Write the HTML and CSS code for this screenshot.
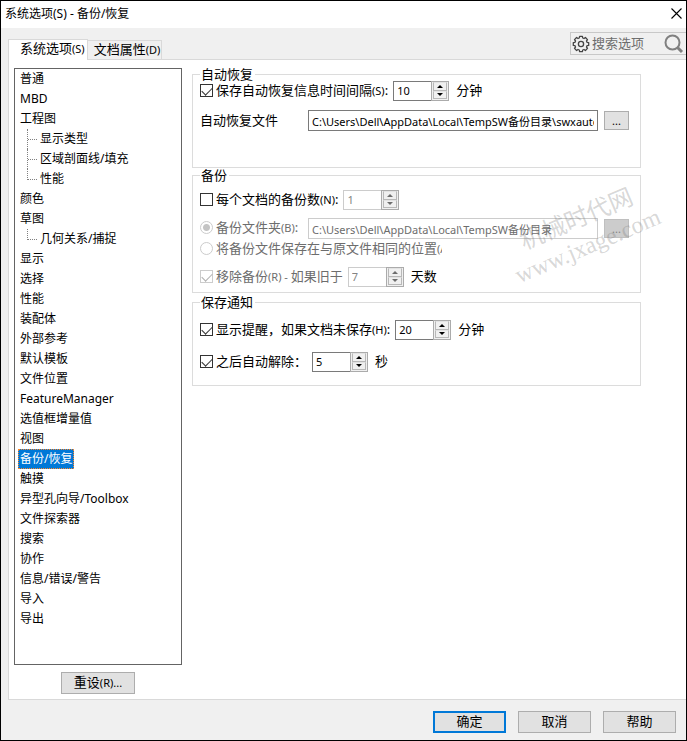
FILE: index.html
```html
<!DOCTYPE html>
<html lang="zh-CN">
<head>
<meta charset="utf-8">
<meta name="viewport" content="width=device-width, initial-scale=1">
<title>系统选项(S) - 备份/恢复</title>
<link rel="stylesheet" href="styles.css">
</head>
<body>
<div class="window">
  <header class="titlebar">
    <h1 class="title">系统选项(S) - 备份/恢复</h1>
    <button class="close" type="button" aria-label="关闭">
      <svg width="11" height="11" viewBox="0 0 11 11"><path d="M.5.5l10 10M10.5.5l-10 10" fill="none" stroke="#000" stroke-width="1.1"/></svg>
    </button>
  </header>

  <div class="toolbar">
    <nav class="tabs">
      <button class="tab tab-active" type="button">系统选项<span class="key">(S)</span></button>
      <button class="tab" type="button">文档属性<span class="key">(D)</span></button>
    </nav>
    <div class="search">
      <svg width="18" height="18" viewBox="0 0 18 18" fill="none" stroke="#444" stroke-width="1.3" stroke-linejoin="round">
        <path d="M7.3 3L7.6 1.3H10.4L10.7 3L12 3.5L13.4 2.5L15.5 4.6L14.5 6L15 7.3L16.7 7.6V10.4L15 10.7L14.5 12L15.5 13.4L13.4 15.5L12 14.5L10.7 15L10.4 16.7H7.6L7.3 15L6 14.5L4.6 15.5L2.5 13.4L3.5 12L3 10.7L1.3 10.4V7.6L3 7.3L3.5 6L2.5 4.6L4.6 2.5L6 3.5Z"/>
        <circle cx="9" cy="9" r="2.6"/>
      </svg>
      <input class="search-input" type="text" aria-label="搜索选项" placeholder="搜索选项">
      <svg width="20" height="20" viewBox="0 0 20 20" fill="none" stroke="#808080"><circle cx="8.5" cy="8.5" r="7" stroke-width="2"/><path d="M13.5 13.5l4.5 4.5" stroke-width="3"/></svg>
    </div>
  </div>

  <main class="panel">
    <div class="side">
      <ul class="tree">
        <li><a href="#">普通</a></li>
        <li><a href="#">MBD</a></li>
        <li><a href="#">工程图</a>
          <ul class="branch">
            <li><a href="#">显示类型</a></li>
            <li><a href="#">区域剖面线/填充</a></li>
            <li><a href="#">性能</a></li>
          </ul>
        </li>
        <li><a href="#">颜色</a></li>
        <li><a href="#">草图</a>
          <ul class="branch">
            <li><a href="#">几何关系/捕捉</a></li>
          </ul>
        </li>
        <li><a href="#">显示</a></li>
        <li><a href="#">选择</a></li>
        <li><a href="#">性能</a></li>
        <li><a href="#">装配体</a></li>
        <li><a href="#">外部参考</a></li>
        <li><a href="#">默认模板</a></li>
        <li><a href="#">文件位置</a></li>
        <li><a href="#">FeatureManager</a></li>
        <li><a href="#">选值框增量值</a></li>
        <li><a href="#">视图</a></li>
        <li><a href="#" class="selected" aria-current="page">备份/恢复</a></li>
        <li><a href="#">触摸</a></li>
        <li><a href="#">异型孔向导/Toolbox</a></li>
        <li><a href="#">文件探索器</a></li>
        <li><a href="#">搜索</a></li>
        <li><a href="#">协作</a></li>
        <li><a href="#">信息/错误/警告</a></li>
        <li><a href="#">导入</a></li>
        <li><a href="#">导出</a></li>
      </ul>
      <button class="btn reset" type="button">重设<span class="key">(R)...</span></button>
    </div>

    <form class="settings">
      <fieldset class="group group-recover">
        <legend>自动恢复</legend>
        <div class="row">
          <input class="check" type="checkbox" id="auto" checked>
          <label for="auto">保存自动恢复信息时间间隔<span class="key">(S)</span>:</label>
          <span class="spin">
            <input type="text" inputmode="numeric" value="10" aria-label="时间间隔">
            <span class="arrows"><button type="button" class="up" aria-label="增加"></button><button type="button" class="down" aria-label="减少"></button></span>
          </span>
          <span class="unit">分钟</span>
        </div>
        <div class="row">
          <label class="lead" for="recover-path">自动恢复文件</label>
          <input class="path" id="recover-path" type="text" value="C:\Users\Dell\AppData\Local\TempSW备份目录\swxauto">
          <button class="btn browse" type="button" aria-label="浏览">...</button>
        </div>
      </fieldset>

      <fieldset class="group group-backup">
        <legend>备份</legend>
        <div class="row">
          <input class="check" type="checkbox" id="copies">
          <label for="copies">每个文档的备份数<span class="key">(N)</span>:</label>
          <span class="spin">
            <input type="text" inputmode="numeric" value="1" aria-label="备份数" disabled>
            <span class="arrows"><button type="button" class="up" aria-label="增加" disabled></button><button type="button" class="down" aria-label="减少" disabled></button></span>
          </span>
        </div>
        <div class="places">
          <div class="row">
            <span class="lead option">
              <input class="radio" type="radio" name="place" id="folder" checked disabled>
              <label class="off" for="folder">备份文件夹<span class="key">(B)</span>:</label>
            </span>
            <input class="path" type="text" aria-label="备份文件夹" value="C:\Users\Dell\AppData\Local\TempSW备份目录" disabled>
            <button class="btn browse" type="button" aria-label="浏览" disabled>...</button>
          </div>
          <div class="row">
            <span class="option">
              <input class="radio" type="radio" name="place" id="same" disabled>
              <label class="off clipped" for="same">将备份文件保存在与原文件相同的位置<span class="key">(A)</span></label>
            </span>
          </div>
        </div>
        <div class="row">
          <input class="check" type="checkbox" id="remove" checked disabled>
          <label class="off" for="remove">移除备份<span class="key">(R) - </span>如果旧于</label>
          <span class="spin">
            <input type="text" inputmode="numeric" value="7" aria-label="天数" disabled>
            <span class="arrows"><button type="button" class="up" aria-label="增加" disabled></button><button type="button" class="down" aria-label="减少" disabled></button></span>
          </span>
          <span class="unit">天数</span>
        </div>
        <div class="watermark" aria-hidden="true"><span>机械时代网</span><span class="site">www.jxage.com</span></div>
      </fieldset>

      <fieldset class="group group-notify">
        <legend>保存通知</legend>
        <div class="row">
          <input class="check" type="checkbox" id="remind" checked>
          <label for="remind">显示提醒，如果文档未保存<span class="key">(H)</span>:</label>
          <span class="spin">
            <input type="text" inputmode="numeric" value="20" aria-label="提醒间隔">
            <span class="arrows"><button type="button" class="up" aria-label="增加"></button><button type="button" class="down" aria-label="减少"></button></span>
          </span>
          <span class="unit">分钟</span>
        </div>
        <div class="row">
          <input class="check" type="checkbox" id="dismiss" checked>
          <label for="dismiss">之后自动解除：</label>
          <span class="spin">
            <input type="text" inputmode="numeric" value="5" aria-label="解除时间">
            <span class="arrows"><button type="button" class="up" aria-label="增加"></button><button type="button" class="down" aria-label="减少"></button></span>
          </span>
          <span class="unit">秒</span>
        </div>
      </fieldset>
    </form>
  </main>

  <footer class="footer">
    <button class="btn primary" type="button">确定</button>
    <button class="btn" type="button">取消</button>
    <button class="btn" type="button">帮助</button>
  </footer>
</div>
</body>
</html>
```
FILE: styles.css
```css
* {
  box-sizing: border-box;
}

body {
  margin: 0;
  color: #000;
  font: 13px/16px "Noto Sans", "Noto Sans CJK SC", sans-serif;
}

button,
input {
  margin: 0;
  padding: 0;
  border-radius: 0;
  color: inherit;
  font: inherit;
}

ul {
  margin: 0;
  padding: 0;
  list-style: none;
}

.key {
  font-size: 11px;
}

.window {
  display: flex;
  flex-direction: column;
  min-height: 100vh;
  border: 1px solid #000;
  background: #f0f0f0;
}

/* Title bar */
.titlebar {
  display: flex;
  align-items: center;
  justify-content: space-between;
  height: 27px;
  padding: 0 4px 2px;
  background: #fff;
}

.title {
  margin: 0;
  font-size: 12px;
  font-weight: 400;
}

.close {
  display: flex;
  border: 0;
  background: none;
}

/* Tabs and search */
.toolbar {
  display: flex;
  align-items: flex-end;
  justify-content: space-between;
  height: 31px;
  padding-left: 7px;
}

.tabs {
  display: flex;
  align-items: flex-end;
}

.tab {
  height: 19px;
  padding: 0 1px 2px 6px;
  border: 1px solid #d9d9d9;
  border-width: 1px 1px 0 0;
  background: #f0f0f0;
  white-space: nowrap;
}

.tab-active {
  z-index: 1;
  height: 21px;
  margin-bottom: -1px;
  padding: 0 2px 4px 11px;
  border-left-width: 1px;
  background: #fff;
}

.search {
  display: flex;
  align-items: center;
  gap: 2px;
  width: 116px;
  height: 23px;
  margin-bottom: 4px;
  padding: 0 2px 0 1px;
  border: 1px solid #c8c8c8;
  border-right: 0;
}

.search svg {
  flex: none;
}

.search-input {
  flex: 1;
  min-width: 0;
  padding-bottom: 2px;
  border: 0;
  background: none;
}

.search-input::placeholder {
  color: #6d6d6d;
  opacity: 1;
}

/* Main panel */
.panel {
  display: flex;
  flex: 1;
  gap: 10px;
  margin-left: 7px;
  padding: 8px 45px 5px 5px;
  border: 1px solid #d9d9d9;
  border-right: 0;
  background: #fff;
}

.side {
  display: flex;
  flex: none;
  flex-direction: column;
  align-items: center;
  gap: 7px;
  width: 168px;
}

.tree {
  flex: 1;
  align-self: stretch;
  padding-left: 3px;
  border: 1px solid #646464;
  font-size: 12px;
  line-height: 20px;
}

.tree a {
  display: block;
  width: fit-content;
  height: 20px;
  padding: 0 2px;
  color: inherit;
  text-decoration: none;
}

.tree .selected {
  background: #0078d7;
  color: #fff;
  outline: 1px dotted #ff8728;
  outline-offset: -1px;
}

.branch li {
  display: flex;
  padding-left: 9px;
}

.branch li::before {
  width: 10px;
  height: 20px;
  border-left: 1px dotted #808080;
  background: repeating-linear-gradient(90deg, #808080 0 1px, transparent 1px 2px) 0 10px / 9px 1px no-repeat;
  content: "";
}

.branch li:last-child::before {
  height: 11px;
}

/* Buttons */
.btn {
  width: 73px;
  height: 22px;
  padding-bottom: 2px;
  border: 1px solid #adadad;
  background: #e1e1e1;
}

.btn.primary {
  border: 2px solid #0078d7;
}

.btn.reset {
  width: 74px;
}

.btn.browse {
  width: 25px;
  height: 19px;
  margin-left: 6px;
  padding: 0;
  font-size: 11px;
}

.btn:disabled {
  border-color: #bfbfbf;
  background: #ccc;
  color: #838383;
}

/* Setting groups */
.settings {
  flex: 1;
  min-width: 0;
}

.group {
  position: relative;
  display: flex;
  flex-direction: column;
  min-width: 0;
  margin: 0;
  border: 1px solid #dcdcdc;
}

.group legend {
  padding: 0 2px 0 1px;
  line-height: 12px;
}

.group-recover {
  gap: 9px;
  margin-bottom: 1px;
  padding: 1px 11px 36px 7px;
}

.group-backup {
  gap: 8px;
  margin-bottom: 3px;
  padding: 9px 11px 5px 7px;
}

.group-notify {
  gap: 12px;
  padding: 12px 11px 13px 7px;
}

.places {
  display: flex;
  flex-direction: column;
  gap: 1px;
}

.row,
.option {
  display: flex;
  align-items: center;
  white-space: nowrap;
}

.row label,
.unit {
  padding-bottom: 2px;
}

.lead {
  flex: none;
  width: 108px;
}

.off {
  color: #6d6d6d;
}

.clipped {
  width: 226px;
  overflow: hidden;
}

.unit {
  margin-left: 7px;
}

.check,
.radio {
  flex: none;
  width: 13px;
  height: 13px;
  margin-right: 3px;
  margin-bottom: 2px;
  border: 1px solid #333;
  background: #fff;
  appearance: none;
}

.check:checked::before {
  display: block;
  width: 9px;
  height: 5px;
  margin: 2px 1px;
  border: solid #333;
  border-width: 0 0 1px 1px;
  transform: rotate(-45deg);
  content: "";
}

.check:disabled,
.radio:disabled {
  border-color: #ccc;
}

.check:disabled::before {
  border-color: #b0b0b0;
}

.radio {
  border-radius: 50%;
}

.radio:checked {
  background: radial-gradient(circle, #c4c4c4 0 3px, #fff 4px);
}

.path {
  flex: 1;
  min-width: 0;
  height: 21px;
  padding: 0 3px;
  border: 1px solid #7a7a7a;
  background: #fff;
  font-size: 11px;
}

.path:disabled {
  border-color: #ccc;
  color: #6d6d6d;
}

.spin {
  display: flex;
  flex: none;
  width: 56px;
  height: 20px;
  margin-left: 5px;
}

.spin input {
  flex: 1;
  min-width: 0;
  padding: 0 3px;
  border: 1px solid #7a7a7a;
  border-right: 0;
  background: #fff;
  font-size: 11px;
}

.spin input:disabled {
  border-color: #ccc;
  color: #838383;
}

.arrows {
  display: flex;
  flex-direction: column;
  width: 18px;
  padding: 0 1px 1px;
  border: 1px solid #ababab;
  background: #f0f0f0;
}

.arrows button {
  display: flex;
  flex: 1;
  align-items: center;
  justify-content: center;
  border: 1px solid #b8b8b8;
  border-top-color: #e3e3e3;
  background: #f0f0f0;
}

.arrows button::before {
  border: 3px solid transparent;
  content: "";
}

.arrows .up::before {
  border-top-width: 0;
  border-bottom-color: #000;
}

.arrows .down::before {
  border-bottom-width: 0;
  border-top-color: #000;
}

.arrows .up:disabled::before {
  border-bottom-color: #6d6d6d;
}

.arrows .down:disabled::before {
  border-top-color: #6d6d6d;
}

.watermark {
  position: absolute;
  top: 21px;
  right: -20px;
  display: flex;
  flex-direction: column;
  align-items: center;
  color: rgb(120 120 120 / 30%);
  font-size: 24px;
  line-height: 30px;
  pointer-events: none;
  transform: rotate(-23deg);
}

.site {
  font-family: "Liberation Serif", serif;
}

/* Footer */
.footer {
  display: flex;
  justify-content: flex-end;
  gap: 12px;
  padding: 11px 10px 7px;
}
```
